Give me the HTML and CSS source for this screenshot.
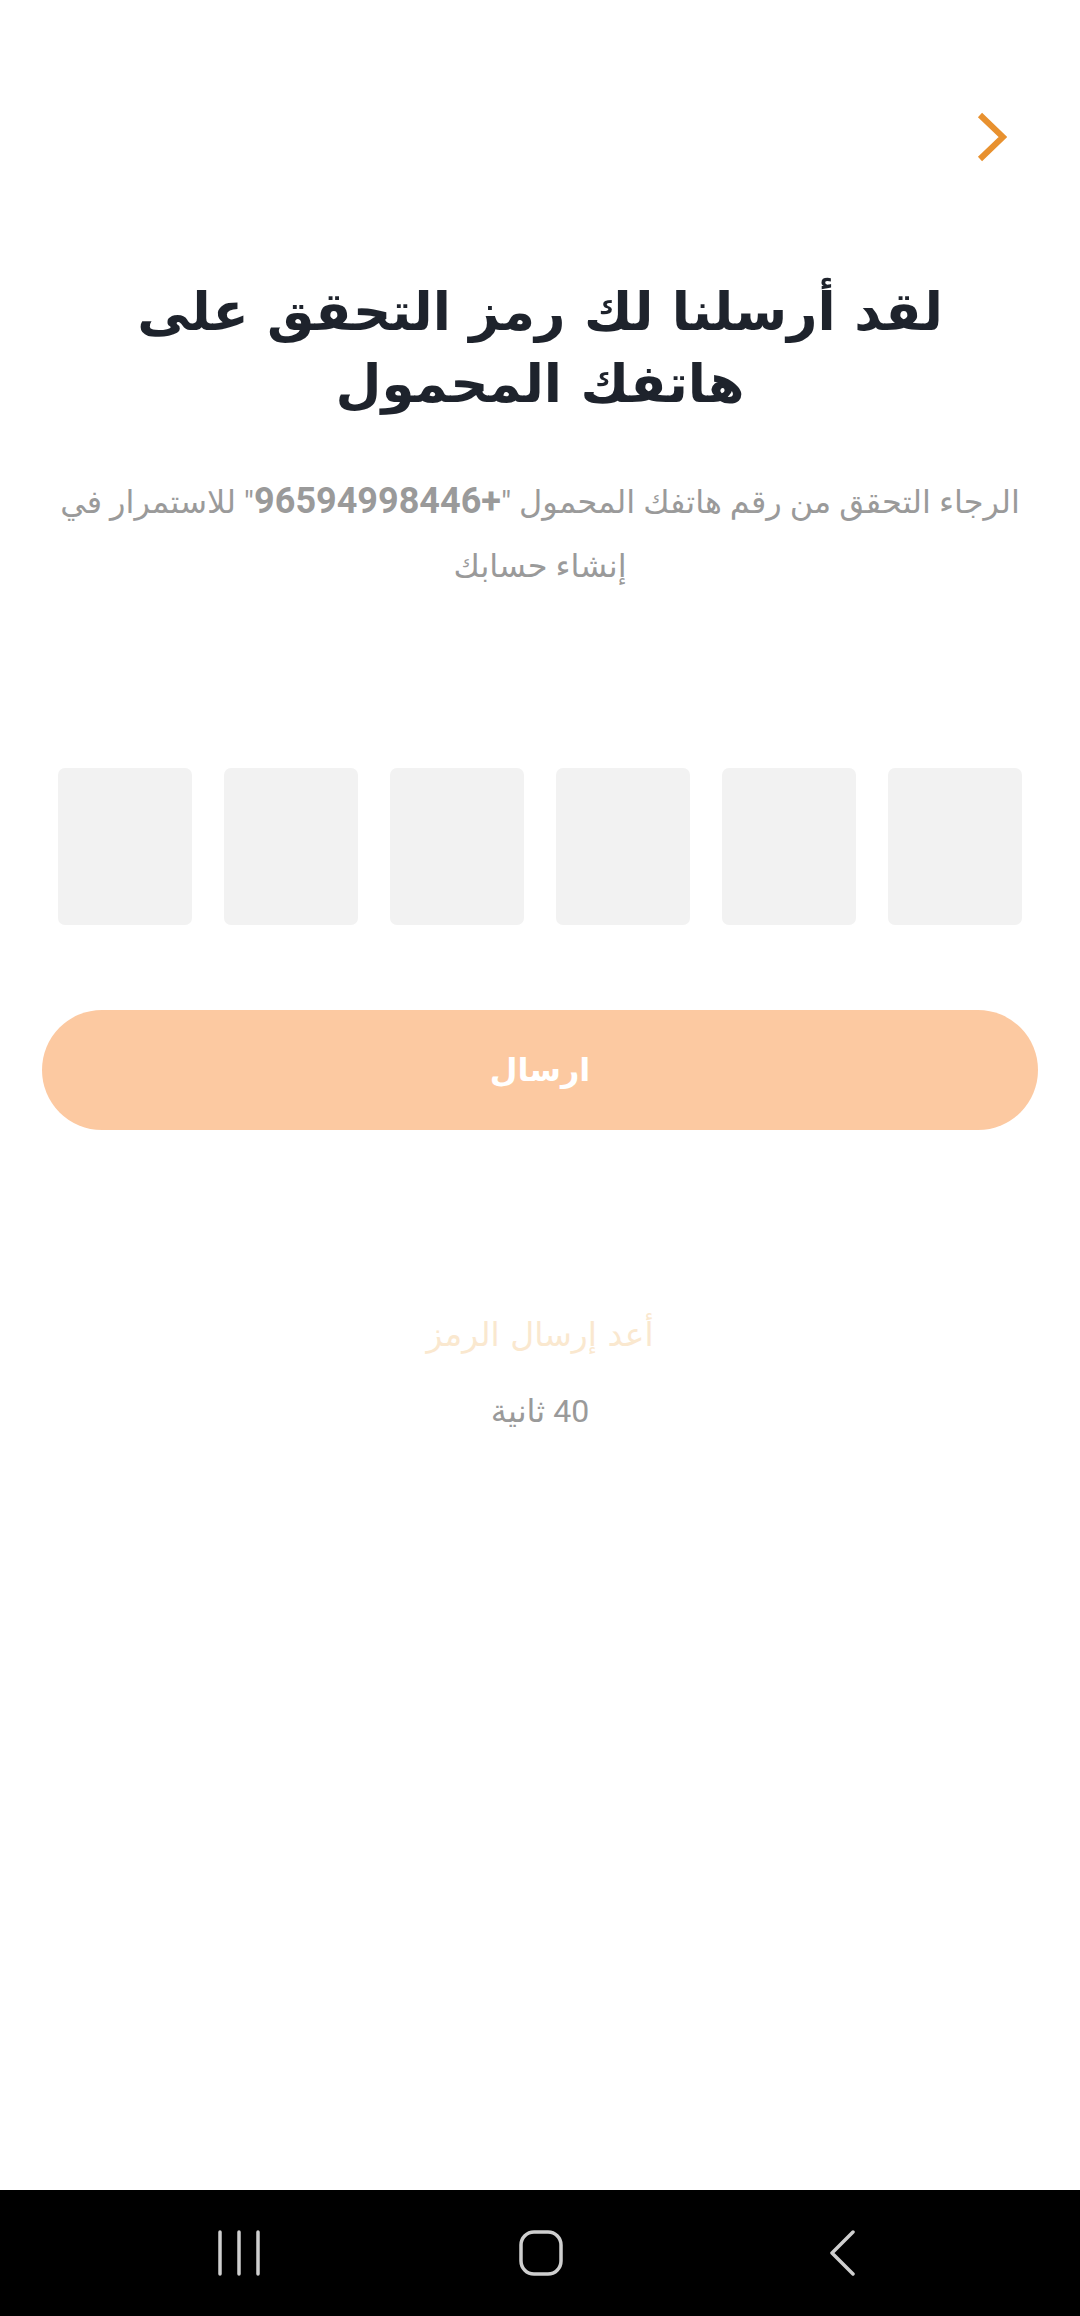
FILE: index.html
```html
<!DOCTYPE html>
<html lang="ar" dir="rtl">
<head>
<meta charset="utf-8">
<title>رمز التحقق</title>
<link rel="stylesheet" href="styles.css">
</head>
<body>
<div class="app">
  <main class="main">
    <header class="topbar">
      <button class="back" aria-label="رجوع">
        <svg width="30" height="50" viewBox="0 0 30 50"><polyline points="3,3 26,25 3,47" fill="none" stroke="#E8912F" stroke-width="6" stroke-linecap="butt" stroke-linejoin="miter"/></svg>
      </button>
    </header>
    <h1 class="title">لقد أرسلنا لك رمز التحقق على هاتفك المحمول</h1>
    <p class="subtitle"><span>الرجاء التحقق من رقم هاتفك المحمول</span> <span class="phone">"<b class="num">+96594998446</b>"</span> <span>للاستمرار في</span> <span>إنشاء حسابك</span></p>
    <div class="code">
      <span class="cell"></span><span class="cell"></span><span class="cell"></span><span class="cell"></span><span class="cell"></span><span class="cell"></span>
    </div>
    <button class="submit">ارسال</button>
    <div class="resend">أعد إرسال الرمز</div>
    <div class="timer">40 ثانية</div>
  </main>
  <nav class="navbar">
    <svg class="nav-icon recents" width="44" height="46" viewBox="0 0 44 46"><g stroke="#CFCFCF" stroke-width="3.5" stroke-linecap="round"><line x1="3" y1="2" x2="3" y2="44"/><line x1="22" y1="2" x2="22" y2="44"/><line x1="41" y1="2" x2="41" y2="44"/></g></svg>
    <svg class="nav-icon home" width="44" height="46" viewBox="0 0 44 46"><rect x="2" y="2" width="40" height="42" rx="13" fill="none" stroke="#CFCFCF" stroke-width="3.5"/></svg>
    <svg class="nav-icon backnav" width="28" height="46" viewBox="0 0 28 46"><polyline points="24,2 3,23 24,44" fill="none" stroke="#CFCFCF" stroke-width="3.5" stroke-linecap="round" stroke-linejoin="round"/></svg>
  </nav>
</div>
</body>
</html>
```
FILE: styles.css
```css
* { box-sizing: border-box; }
html, body { margin: 0; padding: 0; }
body {
  width: 1080px;
  height: 2316px;
  background: #ffffff;
  font-family: "DejaVu Sans", Roboto, sans-serif;
  direction: rtl;
}
.app {
  display: flex;
  flex-direction: column;
  height: 2316px;
}
.main {
  flex: 1;
  display: flex;
  flex-direction: column;
  align-items: center;
}
.topbar {
  align-self: stretch;
  display: flex;
  justify-content: flex-start;
  padding: 112px 73px 0 0;
  height: 200px;
}
.back {
  border: 0;
  background: none;
  padding: 0;
  width: 30px;
  height: 50px;
  display: block;
}
.back svg { display: block; }
.title {
  margin: 76px 105px 0;
  font-family: "DejaVu Sans", sans-serif;
  font-weight: bold;
  font-size: 53px;
  line-height: 72px;
  color: #1E232C;
  text-align: center;
}
.subtitle {
  margin: 49px 60px 0;
  font-family: Roboto, "DejaVu Sans", sans-serif;
  font-size: 32px;
  line-height: 64px;
  color: #9A9A9A;
  text-align: center;
}
.phone {
  unicode-bidi: isolate;
}
.num {
  font-family: Roboto, sans-serif;
  font-weight: bold;
  font-size: 36px;
}
.code {
  margin-top: 170px;
  display: flex;
  gap: 32px;
  direction: ltr;
}
.cell {
  width: 134px;
  height: 157px;
  background: #F2F2F2;
  border-radius: 7px;
}
.submit {
  margin-top: 85px;
  width: 996px;
  height: 120px;
  border: 0;
  border-radius: 60px;
  background: #FCC9A1;
  color: #ffffff;
  font-family: "DejaVu Sans", sans-serif;
  font-weight: bold;
  font-size: 32px;
}
.resend {
  margin-top: 180px;
  font-family: "DejaVu Sans", sans-serif;
  font-size: 33px;
  line-height: 50px;
  color: #FAE8CF;
}
.timer {
  margin-top: 26px;
  font-family: Roboto, "DejaVu Sans", sans-serif;
  font-size: 32px;
  line-height: 50px;
  color: #9A9A9A;
}
.navbar {
  height: 126px;
  background: #000000;
  display: flex;
  align-items: center;
  direction: ltr;
  padding-left: 217px;
}
.nav-icon { display: block; }
.home { margin-left: 258px; }
.backnav { margin-left: 266px; }
```
